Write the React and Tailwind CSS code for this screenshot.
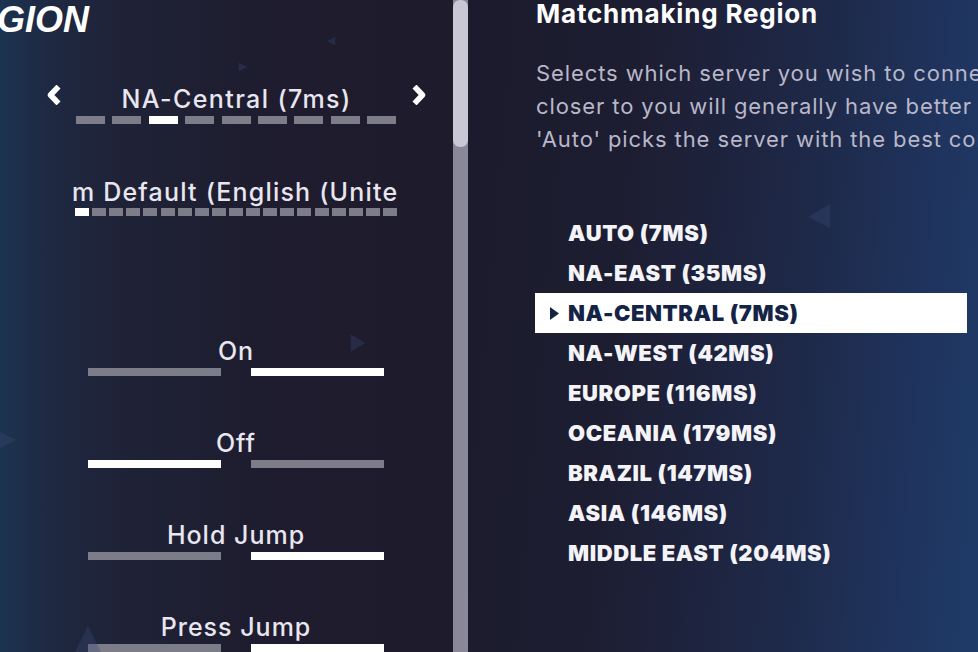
import React from "react";

const regions = [
  "AUTO (7MS)",
  "NA-EAST (35MS)",
  "NA-CENTRAL (7MS)",
  "NA-WEST (42MS)",
  "EUROPE (116MS)",
  "OCEANIA (179MS)",
  "BRAZIL (147MS)",
  "ASIA (146MS)",
  "MIDDLE EAST (204MS)",
];

const toggles = [
  { label: "On", value: 1 },
  { label: "Off", value: 0 },
  { label: "Hold Jump", value: 1 },
  { label: "Press Jump", value: 1 },
];

function Chevron({ dir }) {
  const d = dir === "left" ? "M12.5 1.5 L4.5 10 L12.5 18.5" : "M2.5 1.5 L10.5 10 L2.5 18.5";
  return (
    <svg width="15" height="20" viewBox="0 0 15 20" className="shrink-0">
      <path d={d} fill="none" stroke="#ffffff" strokeWidth="5.5" strokeLinejoin="round" />
    </svg>
  );
}

function Tri({ className, points }) {
  return (
    <svg className={"pointer-events-none absolute " + className} viewBox="0 0 30 30">
      <polygon points={points} fill="#3a4a72" fillOpacity="0.35" />
    </svg>
  );
}

function Toggle({ label, value }) {
  return (
    <div className="mt-[48px] flex flex-col items-center">
      <div className="h-[30px] pt-[4px] text-[25px] leading-[30px] font-medium tracking-[1px] text-[#e8e6ef]">
        {label}
      </div>
      <div className="mt-[6px] flex gap-[30px]">
        <div className={"h-[8px] w-[133px] " + (value === 0 ? "bg-white" : "bg-[#7d7c89]")} />
        <div className={"h-[8px] w-[133px] " + (value === 1 ? "bg-white" : "bg-[#7d7c89]")} />
      </div>
    </div>
  );
}

export default function App() {
  return (
    <div
      className="relative flex h-[652px] w-[978px] overflow-hidden"
      style={{ fontFamily: "Inter, 'Noto Sans', sans-serif" }}
    >
      {/* left panel */}
      <div className="relative flex w-[453px] shrink-0 flex-col bg-[linear-gradient(90deg,#1c3350_0%,#1e2840_12%,#1f2237_28%,#1e1c2e_60%,#1e1b2c_100%)]">
        <Tri className="left-[348px] top-[333px] h-[20px] w-[20px]" points="4,2 26,15 4,28" />
        <Tri className="left-[-6px] top-[428px] h-[24px] w-[24px]" points="2,2 28,15 2,28" />
        <Tri className="left-[72px] top-[624px] h-[32px] w-[32px]" points="15,2 28,28 2,28" />
        <Tri className="left-[238px] top-[62px] h-[10px] w-[10px]" points="2,2 28,15 2,28" />
        <Tri className="left-[326px] top-[36px] h-[10px] w-[10px]" points="28,2 2,15 28,28" />

        <div className="h-[40px] overflow-hidden">
          <div className="ml-[-53px] whitespace-nowrap text-[36px] font-black italic leading-[40px] text-white" style={{ fontFamily: "'Liberation Sans', Arial, sans-serif" }}>
            REGION
          </div>
        </div>

        <div className="mt-[45px] ml-[46px] flex h-[30px] w-[381px] items-center justify-between">
          <Chevron dir="left" />
          <div className="h-[30px] pt-[4px] text-[25px] font-medium leading-[30px] tracking-[1.4px] text-[#e8e6ef]">
            NA-Central (7ms)
          </div>
          <Chevron dir="right" />
        </div>
        <div className="mt-[6px] ml-[76px] flex w-[320px] justify-between">
          {Array.from({ length: 9 }).map((_, i) => (
            <div key={i} className={"h-[8px] w-[29px] " + (i === 2 ? "bg-white" : "bg-[#7d7c89]")} />
          ))}
        </div>

        <div className="mt-[48px] ml-[73px] h-[30px] w-[325px] overflow-x-clip">
          <div className="ml-[-74px] whitespace-nowrap pt-[5px] text-[25px] font-medium leading-[30px] tracking-[1.2px] text-[#e8e6ef]">
            System Default (English (United States))
          </div>
        </div>
        <div className="mt-[6px] ml-[75px] flex w-[322px] justify-between">
          {Array.from({ length: 19 }).map((_, i) => (
            <div key={i} className={"h-[8px] w-[14px] " + (i === 0 ? "bg-white" : "bg-[#7d7c89]")} />
          ))}
        </div>

        <div className="ml-[88px] w-[296px] pt-[68px]">
          {toggles.map((t) => (
            <Toggle key={t.label} label={t.label} value={t.value} />
          ))}
        </div>
      </div>

      {/* scrollbar */}
      <div className="flex w-[15px] shrink-0 flex-col bg-[#8a8799]">
        <div className="h-[147px] rounded-[7px] bg-[#c9c7d5]" />
      </div>

      {/* right panel */}
      <div className="relative flex flex-1 flex-col overflow-hidden bg-[linear-gradient(95deg,#1c1b2d_0%,#1d1d31_30%,#1e2847_62%,#1f3560_88%,#1f3b68_100%)]">
        <Tri className="left-[338px] top-[202px] h-[28px] w-[28px]" points="26,2 2,16 26,28" />

        <div className="ml-[68px] mt-[-1px] h-[30px] whitespace-nowrap text-[26px] font-bold leading-[30px] tracking-[0.8px] text-white">
          Matchmaking Region
        </div>
        <div className="ml-[68px] mt-[28px] whitespace-nowrap text-[22px] leading-[33px] tracking-[0.9px] text-[#b9b7c9]">
          <div>Selects which server you wish to connect to. Servers</div>
          <div>closer to you will generally have better performance.</div>
          <div>'Auto' picks the server with the best connection.</div>
        </div>

        <div className="ml-[67px] mt-[57px] flex w-[432px] flex-col">
          {regions.map((r, i) => {
            const sel = i === 2;
            return (
              <div
                key={r}
                className={
                  "relative flex h-[40px] items-center pl-[33px] pt-[1px] text-[22px] font-black tracking-[0.6px] " +
                  (sel ? "bg-white text-[#152446]" : "text-[#f4f3f8]")
                }
              >
                {sel && (
                  <svg className="absolute left-[15px] top-[14px]" width="9" height="13" viewBox="0 0 9 13">
                    <polygon points="0,0 9,6.5 0,13" fill="#152446" />
                  </svg>
                )}
                {r}
              </div>
            );
          })}
        </div>
      </div>
    </div>
  );
}
